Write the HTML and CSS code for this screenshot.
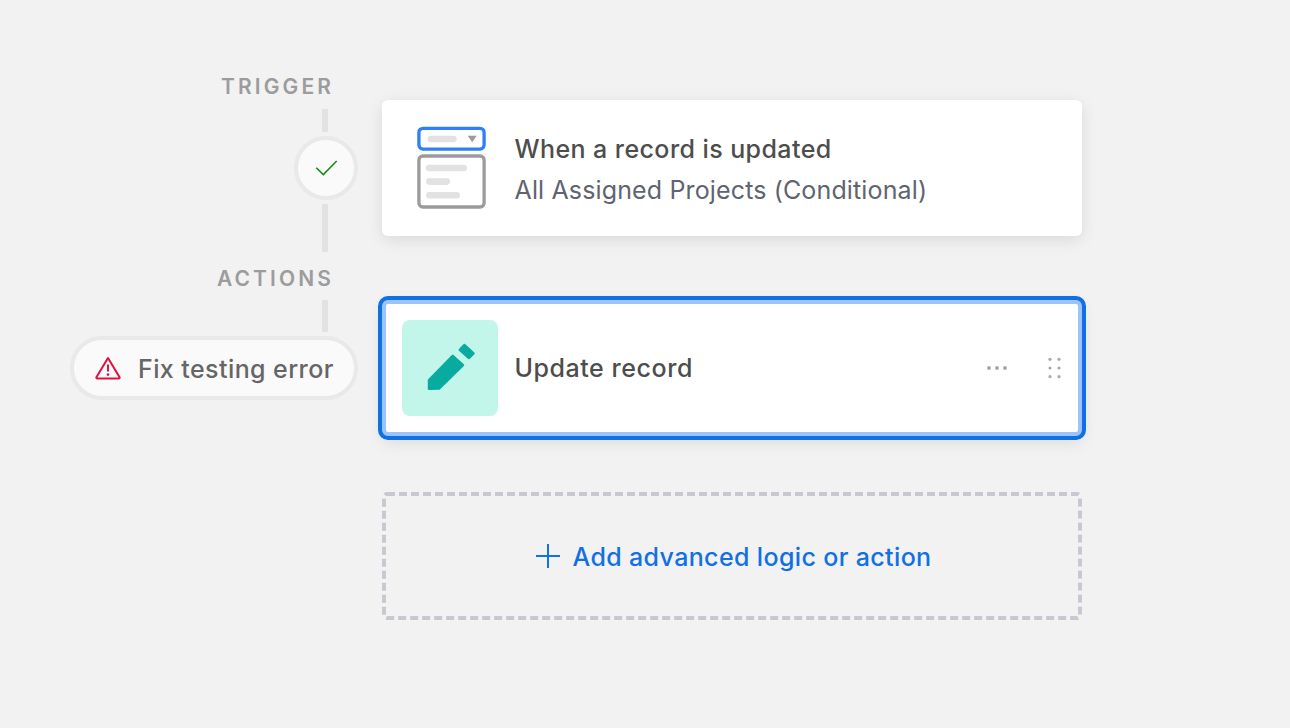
FILE: index.html
```html
<!DOCTYPE html>
<html lang="en">
<head>
<meta charset="utf-8">
<title>Automation</title>
<link rel="stylesheet" href="styles.css">
</head>
<body>
<main class="flow">
  <div class="rail">
    <div class="label label-first">TRIGGER</div>
    <div class="line line-a"></div>
    <div class="status">
      <svg width="24" height="24" viewBox="0 0 24 24" fill="none"><path d="M2.3 11.7 9.3 18.6 22.7 5" stroke="#138a13" stroke-width="1.5"/></svg>
    </div>
    <div class="line line-b"></div>
    <div class="label label-second">ACTIONS</div>
    <div class="line line-c"></div>
    <div class="pill">
      <svg width="26" height="24" viewBox="0 0 26 24" fill="none">
        <path d="M13 2 24.6 21.2a.9.9 0 0 1-.8 1.3H2.2a.9.9 0 0 1-.8-1.3Z" stroke="#e0103f" stroke-width="2" stroke-linejoin="round"/>
        <path d="M13 8.5v7" stroke="#e0103f" stroke-width="2"/>
        <circle cx="13" cy="18.600" r="1.300" fill="#e0103f"/>
      </svg>
      <span class="pill-text">Fix testing error</span>
    </div>
  </div>
  <div class="cards">
    <section class="card">
      <div class="icon-box">
        <svg width="72" height="84" viewBox="0 0 72 84" fill="none">
          <rect x="4.900" y="2.300" width="65.200" height="20.800" rx="4" fill="#fff" stroke="#2f80f7" stroke-width="3.300"/>
          <rect x="13.700" y="9.700" width="29" height="6.600" rx="3.300" fill="#e2e2e2"/>
          <path d="M53.700 9.700h9l-4.500 6.600Z" fill="#9b9b9b"/>
          <rect x="4.900" y="30" width="65.200" height="51" rx="4" fill="#fff" stroke="#9b9b9b" stroke-width="3.300"/>
          <rect x="12" y="38.700" width="41" height="6.600" rx="3.300" fill="#e2e2e2"/>
          <rect x="12" y="52.300" width="24" height="6.600" rx="3.300" fill="#e2e2e2"/>
          <rect x="12" y="66" width="34" height="6.600" rx="3.300" fill="#e2e2e2"/>
        </svg>
      </div>
      <div class="text">
        <div class="title">When a record is updated</div>
        <div class="sub">All Assigned Projects (Conditional)</div>
      </div>
    </section>
    <section class="card card-selected">
      <div class="icon-box icon-box-teal">
        <svg width="52" height="52" viewBox="0 0 52 52" fill="#08ab9f" stroke="#08ab9f" stroke-width="2.500" stroke-linejoin="round">
          <path d="M5 38 28.700 13.800 39 23.200 15 46.500 5 46.800Z"/>
          <path d="M35.800 7.800 40.300 3 49.500 11.400 45 16Z"/>
        </svg>
      </div>
      <div class="title title-single">Update record</div>
      <svg class="more" width="24" height="6" viewBox="0 0 24 6" fill="#a9a9a9"><circle cx="4" cy="3" r="2"/><circle cx="12" cy="3" r="2"/><circle cx="20" cy="3" r="2"/></svg>
      <svg class="drag" width="13" height="22" viewBox="0 0 13 22" fill="#a9a9a9"><circle cx="2" cy="2.300" r="1.600"/><circle cx="11" cy="2.300" r="1.600"/><circle cx="2" cy="11" r="1.600"/><circle cx="11" cy="11" r="1.600"/><circle cx="2" cy="19.700" r="1.600"/><circle cx="11" cy="19.700" r="1.600"/></svg>
    </section>
    <section class="add">
      <svg class="add-border" width="700" height="128" viewBox="0 0 700 128" fill="none"><rect x="2" y="2" width="696" height="124" rx="3" stroke="#c8c9d0" stroke-width="4" stroke-dasharray="8 4"/></svg>
      <svg width="24" height="24" viewBox="0 0 24 24" fill="none"><path d="M12 0v24M0 12h24" stroke="#1170e4" stroke-width="2"/></svg>
      <span class="add-text">Add advanced logic or action</span>
    </section>
  </div>
</main>
</body>
</html>
```

FILE: styles.css
```css
* { box-sizing: border-box; }
html, body { margin: 0; height: 100%; }
body {
  background: #f2f2f3;
  font-family: Inter, "Liberation Sans", sans-serif;
  overflow: hidden;
}
.flow {
  display: flex;
  gap: 24px;
  padding: 75px 0 0 70px;
}
.rail {
  width: 288px;
  display: flex;
  flex-direction: column;
  align-items: flex-end;
}
.label {
  height: 24px;
  line-height: 24px;
  font-size: 21px;
  font-weight: 600;
  letter-spacing: 3.1px;
  color: #9c9c9c;
  margin-right: 24px;
}
.label-second { margin-top: 15px; }
.line {
  width: 6px;
  background: #e2e2e2;
  margin-right: 30px;
}
.line-a { height: 23px; margin-top: 10px; }
.line-b { height: 48px; margin-top: 4px; }
.line-c { height: 32px; margin-top: 9px; }
.status {
  width: 64px;
  height: 64px;
  margin-top: 4px;
  border: 4px solid #e9e9e9;
  border-radius: 50%;
  background: #fafafa;
  display: flex;
  align-items: center;
  justify-content: center;
}
.pill {
  width: 288px;
  height: 64px;
  margin-top: 4px;
  border: 4px solid #e9e9e9;
  border-radius: 32px;
  background: #fafafa;
  display: flex;
  align-items: center;
  gap: 17px;
  padding-left: 21px;
  font-size: 25px;
  font-weight: 500;
  letter-spacing: 0.42px;
  color: #666;
  white-space: nowrap;
}
.pill-text { padding-top: 2px; }
.cards {
  width: 700px;
  padding-top: 25px;
  display: flex;
  flex-direction: column;
}
.card {
  height: 136px;
  background: #fff;
  border-radius: 6px;
  display: flex;
  align-items: center;
  padding-left: 20px;
  box-shadow: 0 4px 16px rgba(0, 0, 0, 0.1);
}
.card-selected {
  margin-top: 64px;
  padding: 0 17px 0 16px;
  border: 4px solid #9cc3fb;
  box-shadow: 0 0 0 4px #1170e4, 0 6px 16px rgba(0, 0, 0, 0.1);
}
.icon-box {
  width: 96px;
  height: 96px;
  flex: none;
  display: flex;
  align-items: center;
  justify-content: center;
  border-radius: 8px;
}
.icon-box-teal { background: #c3f6ea; }
.text { margin-left: 16.500px; padding-top: 2px; }
.title {
  font-size: 25px;
  line-height: 34px;
  font-weight: 500;
  letter-spacing: 0.42px;
  color: #4d4d4d;
  white-space: nowrap;
}
.title-single { margin-left: 16.500px; flex: 1; letter-spacing: 0.55px; }
.sub {
  margin-top: 7px;
  font-size: 25px;
  line-height: 34px;
  letter-spacing: 0.14px;
  color: #5f6470;
  white-space: nowrap;
}
.more { flex: none; margin-right: 39px; }
.drag { flex: none; }
.add {
  position: relative;
  height: 128px;
  margin-top: 56px;
  padding-left: 3px;
  display: flex;
  align-items: center;
  justify-content: center;
  gap: 13px;
}
.add-border { position: absolute; inset: 0; }
.add-text {
  padding-top: 2px;
  font-size: 25px;
  font-weight: 500;
  letter-spacing: 0.36px;
  color: #1170e4;
  white-space: nowrap;
}
```
